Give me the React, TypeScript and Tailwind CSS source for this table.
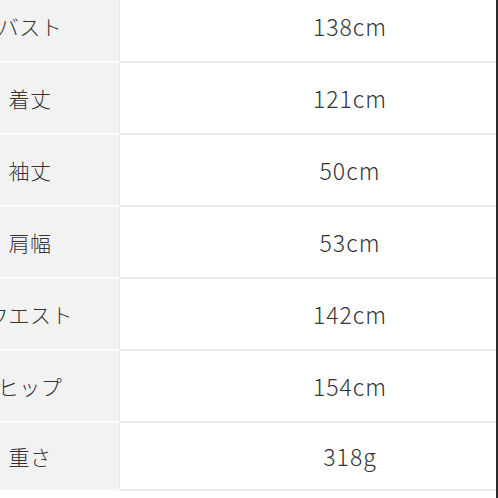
import React from "react";

const rows: [string, string][] = [
  ["バスト", "138cm"],
  ["着丈", "121cm"],
  ["袖丈", "50cm"],
  ["肩幅", "53cm"],
  ["ウエスト", "142cm"],
  ["ヒップ", "154cm"],
  ["重さ", "318g"],
];

export default function App() {
  return (
    <div
      className="w-[498px] h-[498px] overflow-hidden bg-white flex"
      style={{ fontFamily: '"Noto Sans CJK JP", "Noto Sans", sans-serif' }}
    >
      <div className="w-[496px] flex flex-col -mt-[9px] text-[#333]">
        {rows.map(([k, v], i) => (
          <div key={k} className={`flex ${i === rows.length - 1 ? "h-[68px]" : "h-[72px]"}`}>
            <div className="w-[120px] shrink-0 overflow-hidden bg-[#f2f2f2] border-b-2 border-[#fbfbfb] border-r border-r-[#e9e9e9] flex items-center">
              <div className="w-[178px] shrink-0 -ml-[59px] text-center text-[21px] leading-none font-light tracking-[0.5px]">{k}</div>
            </div>
            <div className="flex-1 border-b-2 border-[#e8e8e8] flex items-center justify-center pl-[84px] text-[23px] leading-none font-light tracking-[1px]">
              {v}
            </div>
          </div>
        ))}
      </div>
      <div className="w-[2px] h-full bg-[#2a2a2a]" />
    </div>
  );
}
